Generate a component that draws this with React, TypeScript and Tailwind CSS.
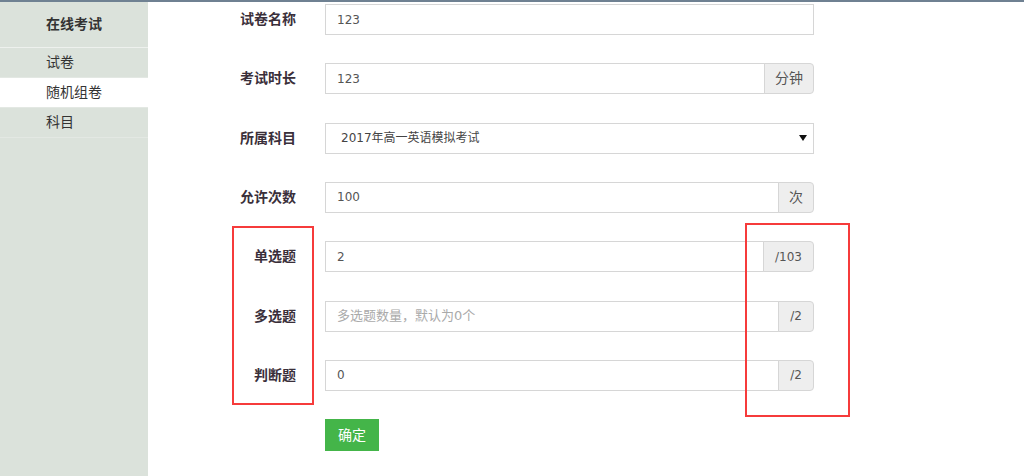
const font = { fontFamily: '"DejaVu Sans", "Noto Sans CJK SC", sans-serif' };

const menu = [
  { label: '试卷', active: false },
  { label: '随机组卷', active: true },
  { label: '科目', active: false },
];

type Row = {
  label: string;
  value?: string;
  placeholder?: string;
  addon?: string;
  select?: boolean;
};

const rows: Row[] = [
  { label: '试卷名称', value: '123' },
  { label: '考试时长', value: '123', addon: '分钟' },
  { label: '所属科目', value: '2017年高一英语模拟考试', select: true },
  { label: '允许次数', value: '100', addon: '次' },
  { label: '单选题', value: '2', addon: '/103' },
  { label: '多选题', placeholder: '多选题数量，默认为0个', addon: '/2' },
  { label: '判断题', value: '0', addon: '/2' },
];

function Field({ row }: { row: Row }) {
  if (row.select) {
    return (
      <div className="flex h-[31px] w-[489px] items-center justify-between border border-[#d6d6d6] bg-white pl-[15px] pr-[6px] text-[12px] text-[#444]">
        <span>{row.value}</span>
        <svg width="8" height="6" viewBox="0 0 8 6">
          <path d="M0 0H8L4 6Z" fill="#111" />
        </svg>
      </div>
    );
  }
  const numeric = row.addon?.startsWith('/');
  return (
    <div className="flex h-[31px] w-[489px]">
      <div className="flex min-w-0 flex-1 items-center border border-[#d6d6d6] bg-white px-[11px] text-[12px]">
        {row.value ? (
          <span className="text-[#555]">{row.value}</span>
        ) : (
          <span className="text-[13px] text-[#aaa]">{row.placeholder}</span>
        )}
      </div>
      {row.addon && (
        <div
          className={`-ml-px flex items-center rounded-r-[4px] border border-[#d6d6d6] bg-[#eeeeee] text-[#555] ${
            numeric ? 'px-[11px] text-[12px]' : 'px-[10px] text-[14px]'
          }`}
        >
          {row.addon}
        </div>
      )}
    </div>
  );
}

export default function App() {
  return (
    <div className="relative flex h-[476px] w-[1024px] overflow-hidden bg-white text-[#333]" style={font}>
      {/* top border */}
      <div className="absolute inset-x-0 top-0 h-[2px] bg-[#6f8192]" />

      {/* Sidebar */}
      <aside className="flex w-[148px] shrink-0 flex-col bg-[#dbe2db] pt-[2px]">
        <div className="flex h-[46px] items-center justify-center border-b border-[#eef1ee] text-[14px] font-bold text-[#333]">
          在线考试
        </div>
        {menu.map((m) => (
          <div
            key={m.label}
            className={`flex h-[30px] items-center border-b border-[#e3e8e3] pl-[46px] text-[14px] text-[#333] ${
              m.active ? 'bg-white' : ''
            }`}
          >
            {m.label}
          </div>
        ))}
      </aside>

      {/* Form */}
      <main className="relative flex flex-1 flex-col gap-[28.33px] pt-[4px]">
        {rows.map((row) => (
          <div key={row.label} className="flex items-center">
            <label className="w-[148px] text-right text-[14px] font-bold text-[#3a2f3a]">{row.label}</label>
            <div className="ml-[29px]">
              <Field row={row} />
            </div>
          </div>
        ))}
        <div className="pl-[177px]">
          <button
            type="button"
            className="flex h-[32px] w-[54px] items-center justify-center bg-[#44b549] text-[14px] text-white"
          >
            确定
          </button>
        </div>

        {/* annotation boxes */}
        <div className="pointer-events-none absolute left-[84px] top-[226px] h-[179px] w-[82px] border-2 border-[#f63b3b]" />
        <div className="pointer-events-none absolute left-[597px] top-[223px] h-[194px] w-[105px] border-2 border-[#f63b3b]" />
      </main>
    </div>
  );
}
